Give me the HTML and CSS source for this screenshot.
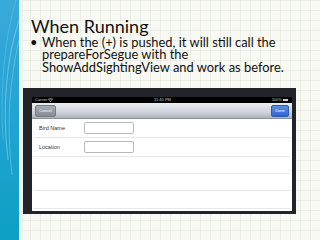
FILE: index.html
```html
<!DOCTYPE html>
<html>
<head>
<meta charset="utf-8">
<link rel="stylesheet" href="styles.css">
</head>
<body>
<div class="slide">
  <div class="strip">
    <svg class="swoosh" width="19" height="240" viewBox="0 0 19 240">
      <path d="M19 20 C 6 60, 2 110, 8 160" stroke="#7fd0ee" stroke-width="1.2" fill="none" opacity="0.6"/>
      <path d="M19 40 C 10 80, 6 120, 12 175" stroke="#9fdcf2" stroke-width="0.8" fill="none" opacity="0.5"/>
      <path d="M16 0 C 4 40, 0 90, 3 140" stroke="#6cc6ea" stroke-width="1" fill="none" opacity="0.5"/>
    </svg>
  </div>
  <div class="main">
    <h1 class="title">When Running</h1>
    <ul class="bullets">
      <li>When the (+) is pushed, it will still call the prepareForSegue with the ShowAddSightingView and work as before.</li>
    </ul>
    <div class="device">
      <div class="status">
        <span class="carrier">Carrier <svg width="5" height="4" viewBox="0 0 10 8"><path d="M0 3 Q5 -2 10 3 M2 5 Q5 2 8 5" stroke="#ccc" stroke-width="1.4" fill="none"/><circle cx="5" cy="7" r="1" fill="#ccc"/></svg></span>
        <span class="time">11:45 PM</span>
        <span class="battery">100% <span class="batt"></span></span>
      </div>
      <div class="navbar">
        <span class="btn cancel">Cancel</span>
        <span class="btn done">Done</span>
      </div>
      <div class="row r1"><span class="label">Bird Name</span><span class="field"></span></div>
      <div class="row r2"><span class="label">Location</span><span class="field"></span></div>
      <div class="row r3"></div>
      <div class="row r3"></div>
      <div class="row r4"></div>
      <div class="row last"></div>
    </div>
  </div>
</div>
</body>
</html>
```
FILE: styles.css
```css
html, body {
  margin: 0;
  padding: 0;
}
body {
  width: 320px;
  height: 240px;
  overflow: hidden;
  background-color: #f9f9f3;
  background-image:
    repeating-linear-gradient(to right, rgba(200,210,190,0.3) 0, rgba(200,210,190,0.3) 1px, transparent 1px, transparent 10px),
    repeating-linear-gradient(to bottom, rgba(200,210,190,0.3) 0, rgba(200,210,190,0.3) 1px, transparent 1px, transparent 10px);
  font-family: Lato, "Open Sans", sans-serif;
}
.slide {
  display: flex;
  height: 240px;
}
.strip {
  width: 19px;
  height: 240px;
  background: linear-gradient(to bottom, #3aa9da 0%, #22a3d2 50%, #0ea0c2 100%);
  border-right: 4px solid #eef2ee;
  flex: none;
}
.swoosh { display: block; }
.main {
  flex: 1;
  display: flex;
  flex-direction: column;
}
.title {
  margin: 16px 0 0 8px;
  font-weight: normal;
  font-size: 18px;
  line-height: 20px;
  color: #111;
}
.bullets {
  margin: 0 0 0 19px;
  padding: 0;
  list-style: none;
  font-size: 12.9px;
  line-height: 12.3px;
  color: #111;
  width: 250px;
}
.bullets li {
  position: relative;
}
.bullets li::before {
  content: "•";
  position: absolute;
  left: -12px;
  top: 0;
}
.device {
  margin-top: 15px;
  width: 260px;
  height: 114px;
  border-style: solid;
  border-color: #232429;
  border-width: 9px 4px 3px 9px;
  background: #fff;
  display: flex;
  flex-direction: column;
}
.status {
  height: 6px;
  flex: none;
  background: #000;
  color: #ccc;
  font-family: "Liberation Sans", sans-serif;
  font-size: 4px;
  line-height: 6px;
  display: flex;
  justify-content: space-between;
  padding: 0 4px 0 3px;
}
.carrier svg { vertical-align: middle; }
.batt {
  display: inline-block;
  width: 5px;
  height: 2px;
  background: #ccc;
  vertical-align: middle;
}
.navbar {
  height: 16px;
  flex: none;
  background: linear-gradient(to bottom, #eceef2 0%, #d0d3da 60%, #aeb2bb 100%);
  border-bottom: 1px solid #8c9099;
  box-sizing: border-box;
  display: flex;
  align-items: center;
  justify-content: space-between;
  padding: 0 3px;
}
.btn {
  height: 10px;
  border-radius: 2px;
  color: #fff;
  font-family: "Liberation Sans", sans-serif;
  font-size: 4px;
  line-height: 10px;
  text-align: center;
  margin-top: 1px;
}
.cancel {
  width: 19px;
  background: linear-gradient(to bottom, #a8acb4, #868b94);
  border: 1px solid #777b83;
}
.done {
  width: 16px;
  background: linear-gradient(to bottom, #5a8ee6, #2f66cf);
  border: 1px solid #2a58b0;
}
.row {
  box-sizing: border-box;
  border-bottom: 1px solid #e8e8e8;
  margin: 0 2px 0 1px;
  display: flex;
  align-items: center;
  flex: none;
}
.r1, .r2 { height: 19px; }
.r3 { height: 17px; }
.r4 { height: 18px; }
.row.last { border-bottom: none; height: 2px; }
.label {
  width: 45px;
  padding-left: 6px;
  font-family: "Liberation Sans", sans-serif;
  font-size: 5.5px;
  color: #333;
}
.field {
  box-sizing: border-box;
  width: 50px;
  height: 12px;
  border: 1px solid #b8b8b8;
  border-radius: 2px;
  background: #fff;
}
```
